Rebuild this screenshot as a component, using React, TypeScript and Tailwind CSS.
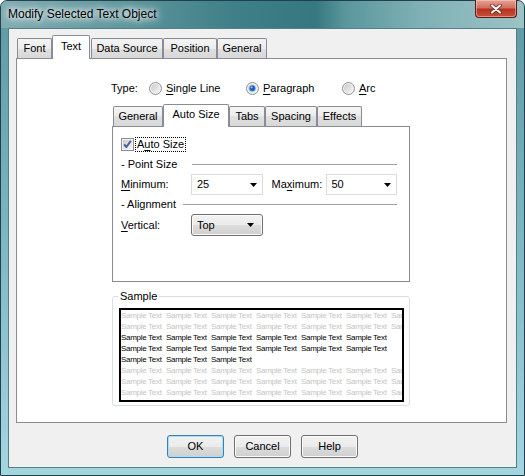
import React from "react";

function Radio({ checked, id }: { checked?: boolean; id: string }) {
  return (
    <svg width="13" height="13" viewBox="0 0 13 13" className="shrink-0">
      <defs>
        <linearGradient id={`rg-${id}`} x1="0" y1="0" x2="1" y2="1">
          <stop offset="0" stopColor="#c9c9c9" />
          <stop offset="1" stopColor="#f7f7f7" />
        </linearGradient>
        <radialGradient id={`rc-${id}`} cx="0.45" cy="0.45" r="0.6">
          <stop offset="0" stopColor="#0c3f8e" />
          <stop offset="0.6" stopColor="#2a6cc8" />
          <stop offset="1" stopColor="#8cc4f2" />
        </radialGradient>
      </defs>
      <circle cx="6.5" cy="6.5" r="6" fill="#f4f4f4" stroke="#8e8f8f" />
      <circle cx="6.5" cy="6.5" r="4.5" fill={`url(#rg-${id})`} />
      {checked && (
        <>
          <circle cx="6.5" cy="6.5" r="3.3" fill={`url(#rc-${id})`} />
          <circle cx="5.6" cy="5.4" r="1" fill="#cfe8ff" opacity="0.8" />
        </>
      )}
    </svg>
  );
}

function Check() {
  return (
    <svg width="13" height="13" viewBox="0 0 13 13" className="shrink-0">
      <defs>
        <linearGradient id="cbg" x1="0" y1="0" x2="1" y2="1">
          <stop offset="0" stopColor="#cbcbcb" />
          <stop offset="1" stopColor="#f6f6f6" />
        </linearGradient>
      </defs>
      <rect x="0.5" y="0.5" width="12" height="12" fill="#f4f4f4" stroke="#8e8f8f" />
      <rect x="2" y="2" width="9" height="9" fill="url(#cbg)" />
      <path d="M3.2 6.4 L5.4 9 L9.8 2.8" stroke="#4a5fa2" strokeWidth="2" fill="none" strokeLinejoin="round" />
    </svg>
  );
}

function Arrow() {
  return (
    <svg width="7" height="4" viewBox="0 0 7 4" className="shrink-0">
      <path d="M0 0 H7 L3.5 4 Z" fill="#000" />
    </svg>
  );
}

function U({ children }: { children: React.ReactNode }) {
  return <span className="underline underline-offset-[2px]">{children}</span>;
}

const tabOff =
  "h-[20px] flex items-center justify-center border border-b-0 border-[#898c95] rounded-t-[2px] bg-[linear-gradient(to_bottom,#f4f4f4_0%,#ececec_50%,#e0e0e0_50%,#d8d8d8_100%)]";
const tabOn =
  "relative z-10 mb-[-1px] flex items-center justify-center pb-[3px] border border-b-0 border-[#898c95] rounded-t-[2px] bg-white";

const btn =
  "w-[57px] h-[23px] flex items-center justify-center rounded-[3px] border bg-[linear-gradient(to_bottom,#f2f2f2_0%,#ebebeb_50%,#dddddd_50%,#cfcfcf_100%)]";

function SampleRow({ n, dark }: { n: number; dark?: boolean }) {
  return (
    <div className={`flex h-[11px] leading-[11px] overflow-hidden whitespace-nowrap ${dark ? "text-black" : "text-[#c4c4c4]"}`}>
      {Array.from({ length: n }).map((_, i) => (
        <span key={i} className="inline-block w-[45px] shrink-0 overflow-visible">
          Sample Text
        </span>
      ))}
    </div>
  );
}

export default function App() {
  return (
    <div className="w-[525px] h-[476px] overflow-hidden font-['Liberation_Sans',Arial,sans-serif] text-[11px] text-black">
      <div className="relative w-full h-full flex flex-col rounded-t-[7px] border border-[#22404a] bg-[linear-gradient(to_bottom,#5e98a1_0%,#7fb7c1_50%,#a4d6e0_100%)]">
        {/* Title bar */}
        <div className="h-[27px] shrink-0 flex items-center pl-[7px] rounded-t-[6px] bg-[linear-gradient(to_right,#7eabb1_0%,#5b949b_25%,#3f7f87_45%,#367780_60%,#5a979d_66%,#7fb0b5_80%,#9cc3c6_100%)]">
          <span className="text-[12px] pb-[1px] [text-shadow:0_0_5px_#fff,0_0_9px_#fff,0_0_14px_rgba(255,255,255,0.9)]">
            Modify Selected Text Object
          </span>
        </div>
        <div className="absolute top-[-1px] right-[7px] w-[42px] h-[18px] rounded-b-[4px] border border-t-0 border-[#5c1c16] bg-[linear-gradient(to_bottom,#e6a397_0%,#d0705f_45%,#b8321f_55%,#c8503a_100%)] flex items-center justify-center shadow-[inset_0_0_0_1px_rgba(255,210,200,0.5)]">
          <svg width="12" height="10" viewBox="0 0 12 10">
            <path d="M2 1.5 L10 8.5 M10 1.5 L2 8.5" stroke="#5a1a12" strokeWidth="3.6" strokeLinecap="round" />
            <path d="M2 1.5 L10 8.5 M10 1.5 L2 8.5" stroke="#ffffff" strokeWidth="2.2" strokeLinecap="round" />
          </svg>
        </div>

        {/* Client area */}
        <div className="mx-[7px] mb-[7px] flex-1 flex flex-col border border-[#557f88] bg-[#f0f0f0]">
          {/* Outer tabs */}
          <div className="mt-[6px] h-[23px] pl-[8px] flex items-end">
            <div className={`${tabOff} w-[35px]`}>Font</div>
            <div className={`${tabOn} w-[38px] h-[24px] ml-0`}>Text</div>
            <div className={`${tabOff} w-[72px] ml-[1px]`}>Data Source</div>
            <div className={`${tabOff} w-[54px]`}>Position</div>
            <div className={`${tabOff} w-[50px]`}>General</div>
          </div>

          {/* Outer panel */}
          <div className="ml-[7px] w-[491px] h-[365px] border border-[#898c95] bg-white flex flex-col pl-[95px]">
            {/* Type row */}
            <div className="mt-[21px] ml-[-1px] h-[16px] flex items-center">
              <span className="w-[38px]">Type:</span>
              <div className="w-[97px] flex items-center gap-[4px]">
                <Radio id="a" />
                <span><U>S</U>ingle Line</span>
              </div>
              <div className="w-[96px] flex items-center gap-[4px]">
                <Radio id="b" checked />
                <span><U>P</U>aragraph</span>
              </div>
              <div className="flex items-center gap-[4px]">
                <Radio id="c" />
                <span><U>A</U>rc</span>
              </div>
            </div>

            {/* Inner tabs */}
            <div className="mt-[8px] h-[22px] pl-[1px] flex items-end">
              <div className={`${tabOff} h-[19px] w-[50px]`}>General</div>
              <div className={`${tabOn} w-[66px] h-[23px]`}>Auto Size</div>
              <div className={`${tabOff} h-[19px] w-[36px]`}>Tabs</div>
              <div className={`${tabOff} h-[19px] w-[52px]`}>Spacing</div>
              <div className={`${tabOff} h-[19px] w-[45px]`}>Effects</div>
            </div>

            {/* Inner panel */}
            <div className="w-[298px] h-[156px] border border-[#898c95] bg-white flex flex-col pl-[8px] pr-[12px]">
              <div className="mt-[10px] h-[15px] flex items-center">
                <Check />
                <span className="ml-[1px] px-[1px] h-[15px] flex items-center border border-dotted border-black">
                  A<U>u</U>to Size
                </span>
              </div>
              <div className="mt-[5px] h-[14px] flex items-center">
                <span className="w-[71px] shrink-0">- Point Size</span>
                <div className="flex-1 border-t border-[#a0a0a0]" />
              </div>
              <div className="mt-[3px] h-[21px] flex items-center">
                <span className="w-[70px] shrink-0"><U>M</U>inimum:</span>
                <div className="w-[72px] h-[21px] flex items-center justify-between pl-[5px] pr-[5px] border border-[#dcdcdc] bg-white">
                  <span>25</span>
                  <Arrow />
                </div>
                <span className="ml-[9px] w-[54px] shrink-0">Ma<U>x</U>imum:</span>
                <div className="w-[72px] h-[21px] flex items-center justify-between pl-[5px] pr-[5px] border border-[#dcdcdc] bg-white">
                  <span>50</span>
                  <Arrow />
                </div>
              </div>
              <div className="mt-[2px] h-[14px] flex items-center">
                <span className="w-[62px] shrink-0">- Alignment</span>
                <div className="flex-1 border-t border-[#a0a0a0]" />
              </div>
              <div className="mt-[3px] h-[22px] flex items-center">
                <span className="w-[70px] shrink-0"><U>V</U>ertical:</span>
                <div className="w-[72px] h-[22px] flex items-center justify-between pl-[5px] pr-[8px] rounded-[3px] border border-[#707070] bg-[linear-gradient(to_bottom,#f2f2f2_0%,#ebebeb_50%,#dddddd_50%,#cfcfcf_100%)] shadow-[inset_0_0_0_1px_#fbfbfb]">
                  <span>Top</span>
                  <Arrow />
                </div>
              </div>
            </div>

            {/* Sample group */}
            <div className="relative mt-[14px] w-[298px] h-[110px] rounded-[3px] border border-[#d5dfe5] flex flex-col">
              <span className="absolute top-[-8px] left-[5px] bg-white px-[2px] leading-[14px]">Sample</span>
              <div className="mt-[11px] ml-[6px] w-[285px] h-[94px] border-2 border-black bg-white overflow-hidden flex flex-col text-[8px] tracking-[-0.3px]">
                <SampleRow n={7} />
                <SampleRow n={7} />
                <SampleRow n={6} dark />
                <SampleRow n={6} dark />
                <SampleRow n={3} dark />
                <SampleRow n={7} />
                <SampleRow n={7} />
                <SampleRow n={7} />
              </div>
            </div>
          </div>

          {/* Buttons */}
          <div className="mt-[12px] flex justify-center gap-[10px]">
            <div className={`${btn} border-[#3c7fb1] shadow-[inset_0_0_0_1px_#a6e0f6]`}>OK</div>
            <div className={`${btn} border-[#707070] shadow-[inset_0_0_0_1px_#fbfbfb]`}>Cancel</div>
            <div className={`${btn} border-[#707070] shadow-[inset_0_0_0_1px_#fbfbfb]`}>Help</div>
          </div>
        </div>
      </div>
    </div>
  );
}
